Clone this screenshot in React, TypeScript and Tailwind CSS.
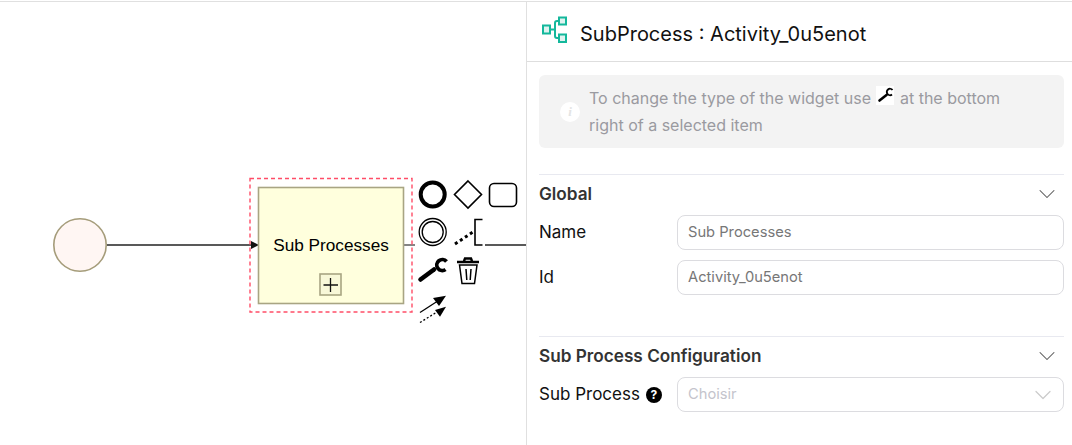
import { ChevronDown } from "lucide-react";

function Diagram() {
  return (
    <svg width="526" height="444" className="absolute top-0 left-0">
      {/* start event */}
      <circle cx="80" cy="245" r="26.2" fill="#fff6f3" stroke="#a59c7a" strokeWidth="1.6" />
      {/* flows */}
      <path d="M107 245 H252" stroke="#222" strokeWidth="1.4" />
      <path d="M251 241 L259 245 L251 249 Z" fill="#111" />
      <path d="M404 245 H415" stroke="#333" strokeWidth="1.2" />
      {/* sub process */}
      <rect x="258.5" y="187.5" width="145" height="116" fill="#ffffdd" stroke="#a8a583" strokeWidth="1.6" />
      <rect x="320" y="274" width="21" height="21" fill="#f8f8d8" stroke="#a8a583" strokeWidth="1.6" />
      <path d="M330.5 278 V292 M323.5 285 H338" stroke="#111" strokeWidth="1.3" />
      {/* selection */}
      <rect x="250" y="178.5" width="162" height="133.5" fill="none" stroke="#ff4d67" strokeWidth="1.4" strokeDasharray="4 3" />
      {/* context pad */}
      <rect x="416" y="178" width="104" height="150" fill="#fff" />
      <path d="M485 245 H526" stroke="#222" strokeWidth="1.4" />
      <circle cx="432.7" cy="194.5" r="12" fill="none" stroke="#000" strokeWidth="4" />
      <path d="M468 181 L481.5 194.5 L468 208 L454.5 194.5 Z" fill="none" stroke="#000" strokeWidth="1.6" />
      <rect x="489.5" y="183.5" width="27" height="23" rx="4.5" fill="none" stroke="#000" strokeWidth="1.6" />
      <circle cx="432.7" cy="232" r="13.5" fill="none" stroke="#000" strokeWidth="1.3" />
      <circle cx="432.7" cy="232" r="10.5" fill="none" stroke="#000" strokeWidth="1.3" />
      <path d="M455 244 L473 232" stroke="#000" strokeWidth="3" strokeDasharray="3 3" />
      <path d="M482.5 219.5 H475 V245 H482.5" fill="none" stroke="#000" strokeWidth="1.6" />
      <path d="M420.5 279.5 L434 269.5" stroke="#000" strokeWidth="4.6" strokeLinecap="round" />
      <path d="M446.5 261.5 A5.5 5.5 0 1 0 445.5 269.5" fill="none" stroke="#000" strokeWidth="3.8" />
      <path d="M457 262 H479 M464 261 L465 258.5 H471 L472 261" fill="none" stroke="#000" strokeWidth="2.4" />
      <path
        d="M459.5 265 L462 283.5 H474.5 L477 265 Z M466 269 L466.8 280 M471 269 L470.2 280"
        fill="none"
        stroke="#000"
        strokeWidth="1.5"
      />
      <path d="M420 312.5 L437 301.5" stroke="#000" strokeWidth="1.3" />
      <path d="M446 295.7 L439 306 L433 298 Z" fill="#000" />
      <path d="M420 322.5 L437 312" stroke="#000" strokeWidth="1.3" strokeDasharray="2 2" />
      <path d="M446 306.7 L440 316.7 L435 310 Z" fill="#000" />
    </svg>
  );
}

function Field({ label, value }: { label: string; value: string }) {
  return (
    <div className="flex items-center h-[35px]">
      <span className="w-[138px] text-[17px] text-[#111]">{label}</span>
      <div className="flex-1 h-[35px] flex items-center px-[10px] border border-[#dcdce0] rounded-lg text-[14.7px] text-[#777]">
        {value}
      </div>
    </div>
  );
}

export default function App() {
  return (
    <div className="w-[1072px] h-[445px] flex flex-col bg-white font-['Inter',sans-serif] overflow-hidden">
      <div className="h-px bg-white shrink-0" />
      <div className="h-px bg-[#e0e0e0] shrink-0" />
      <div className="flex flex-1 min-h-0">
        {/* canvas */}
        <div className="relative w-[526px] shrink-0 -mt-[2px]">
          <Diagram />
          <div className="absolute left-[259px] top-[235px] w-[144px] text-center text-[17.2px] leading-5 text-black font-['Liberation_Sans',sans-serif]">
            Sub Processes
          </div>
        </div>

        {/* properties panel */}
        <div className="flex-1 border-l border-[#e0e0e0] flex flex-col">
          <div className="h-[60px] border-b border-[#dedede] flex items-center pl-[15px] gap-[13px] shrink-0">
            <svg width="25" height="27" viewBox="0 0 25 27" fill="none" stroke="#14b89c" strokeWidth="2" className="-mt-[5px]">
              <rect x="1" y="9.5" width="7" height="8" fill="#dff3f0" />
              <rect x="17" y="1.5" width="7" height="7" fill="#dff3f0" />
              <rect x="17" y="18.5" width="7" height="7.5" fill="#dff3f0" />
              <path d="M8 13.5 H13 M17 5 H15 Q13 5 13 7 V20 Q13 22 15 22 H17" />
            </svg>
            <span className="text-[20px] text-[#111] mt-[5px]">SubProcess : Activity_0u5enot</span>
          </div>

          <div className="pl-[12px] pr-[8px] flex flex-col">
            <div className="mt-[13px] h-[73px] bg-[#f3f3f3] rounded-md flex items-center pl-[21px] gap-[9px]">
              <div className="w-5 h-5 rounded-full bg-white flex items-center justify-center text-[13px] italic font-bold text-[#e4e4e4] font-['Liberation_Serif',serif] shrink-0">
                i
              </div>
              <p className="text-[16px] leading-[27px] text-[#9a9aa0]">
                To change the type of the widget use{" "}
                <span className="inline-block align-[-1px] w-[18px] h-[19px] bg-white mx-[1px]">
                  <svg width="18" height="19" viewBox="0 0 18 19" fill="none" stroke="#000">
                    <path d="M3.5 14.5 L10.5 9" strokeWidth="2.6" strokeLinecap="round" />
                    <path d="M16.5 4 A3.2 3.2 0 1 0 16 8.5" strokeWidth="1.9" />
                  </svg>
                </span>{" "}
                at the bottom
                <br />
                right of a selected item
              </p>
            </div>

            <div className="mt-[26px] border-t border-[#e8e9f0] pt-[7px]">
              <div className="flex items-center justify-between h-6 pr-[3px]">
                <span className="text-[17.2px] font-semibold text-[#333]">Global</span>
                <ChevronDown className="w-[28px] h-[28px] text-[#555]" strokeWidth={0.9} />
              </div>
              <div className="mt-[9px] flex flex-col gap-[10px]">
                <Field label="Name" value="Sub Processes" />
                <Field label="Id" value="Activity_0u5enot" />
              </div>
            </div>

            <div className="mt-[41px] border-t border-[#e8e9f0] pt-[7px]">
              <div className="flex items-center justify-between h-6 pr-[3px]">
                <span className="text-[17.2px] font-semibold text-[#333]">Sub Process Configuration</span>
                <ChevronDown className="w-[28px] h-[28px] text-[#555]" strokeWidth={0.9} />
              </div>
              <div className="mt-[9px] flex items-center h-[35px]">
                <span className="w-[138px] flex items-center gap-[6px] text-[17px] text-[#111]">
                  Sub Process
                  <span className="w-4 h-4 rounded-full bg-black text-white text-[12px] font-bold flex items-center justify-center leading-none">
                    ?
                  </span>
                </span>
                <div className="flex-1 h-[35px] flex items-center justify-between pl-[10px] pr-[6px] border border-[#dcdce0] rounded-lg text-[14.7px] text-[#c4c4cc]">
                  Choisir
                  <ChevronDown className="w-[28px] h-[28px] text-[#ccc]" strokeWidth={1.1} />
                </div>
              </div>
            </div>
          </div>
        </div>
      </div>
    </div>
  );
}
